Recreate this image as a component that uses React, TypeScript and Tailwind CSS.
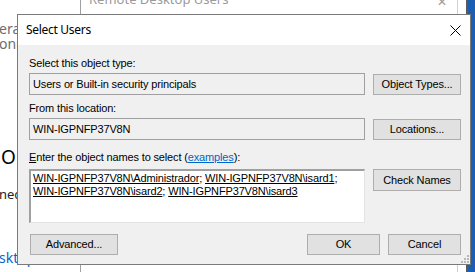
import React from "react";

const sans = { fontFamily: '"Liberation Sans", Arial, sans-serif' };
const ui = { fontFamily: '"Noto Sans", "Open Sans", sans-serif' };

function Btn({ children, className = "" }: { children: React.ReactNode; className?: string }) {
  return (
    <div
      className={
        "flex items-center justify-center bg-[#e1e1e1] border border-[#adadad] text-[11px] tracking-[-0.15px] text-black leading-none " +
        className
      }
    >
      {children}
    </div>
  );
}

function Name({ t }: { t: string }) {
  return <span className="underline underline-offset-[1px]">{t}</span>;
}

export default function App() {
  return (
    <div className="relative w-[475px] h-[272px] bg-white overflow-hidden" style={sans}>
      {/* background window */}
      <div className="absolute left-[80px] top-0 w-px h-[272px] bg-[#a0a0a0]" />
      <div className="absolute left-[457px] top-0 w-px h-[272px] bg-[#d0d0d0]" />
      <div className="absolute left-[466px] top-0 w-[2px] h-[272px] bg-[#5a5a5a]" />
      <div className="absolute left-[468px] top-0 w-[7px] h-[272px] bg-[#1a5fb4]" />
      <div
        className="absolute left-[89px] top-[-9px] text-[13px] leading-[16px] text-[#9a9a9a] whitespace-nowrap"
        style={ui}
      >
        Remote Desktop Users
      </div>
      <div className="absolute left-[437px] top-[-7px] text-[12px] text-[#9a9a9a]">✕</div>
      <div
        className="absolute left-[-1px] top-[21px] text-[14px] leading-[16px] text-[#6d6d6d] whitespace-nowrap"
        style={ui}
      >
        <div>eral</div>
        <div className="mt-[-1px]">onne</div>
      </div>
      <div
        className="absolute left-[1px] top-[143px] text-[19px] text-black whitespace-nowrap"
        style={ui}
      >
        O
      </div>
      <div
        className="absolute left-[-1px] top-[185px] text-[13px] text-[#222] whitespace-nowrap"
        style={ui}
      >
        nect
      </div>
      <div
        className="absolute left-[-1px] top-[247px] text-[14px] text-[#0066cc] whitespace-nowrap"
        style={ui}
      >
        sktop
      </div>

      {/* dialog */}
      <div className="absolute left-[17px] top-[14px] w-[454px] h-[251px] border border-[#7a7a7a] bg-[#f0f0f0] flex flex-col">
        <div className="h-[30px] bg-white flex items-center justify-between pl-[8px] pr-[7px] shrink-0">
          <span className="text-[12px] tracking-[-0.3px] text-black" style={ui}>
            Select Users
          </span>
          <svg width="11" height="11" viewBox="0 0 11 11" className="mr-[2px]">
            <path d="M0.5 0.5 L10.5 10.5 M10.5 0.5 L0.5 10.5" stroke="#000" strokeWidth="1" />
          </svg>
        </div>
        <div className="flex-1 flex flex-col pl-[11px] pt-[12px] text-[11px] tracking-[-0.15px] text-black">
          <div className="h-[13px] leading-[13px]">Select this object type:</div>
          <div className="mt-[3px] flex gap-[8px] items-start">
            <div className="w-[336px] h-[22px] border border-[#a0a0a0] bg-[#f0f0f0] flex items-center pl-[3px]">
              Users or Built-in security principals
            </div>
            <Btn className="w-[88px] h-[21px] mt-[1px]">Object Types...</Btn>
          </div>
          <div className="mt-[7px] h-[13px] leading-[13px]">From this location:</div>
          <div className="mt-[3px] flex gap-[8px] items-start">
            <div className="w-[336px] h-[22px] border border-[#a0a0a0] bg-[#f0f0f0] flex items-center pl-[3px]">
              WIN-IGPNFP37V8N
            </div>
            <Btn className="w-[88px] h-[21px] mt-[1px]">Locations...</Btn>
          </div>
          <div className="mt-[11px] h-[13px] leading-[13px]">
            <span className="underline">E</span>nter the object names to select (
            <span className="text-[#0066cc] underline">examples</span>):
          </div>
          <div className="mt-[5px] flex gap-[8px] items-start">
            <div className="w-[336px] h-[54px] border-t-2 border-l-2 border-r border-b border-t-[#a0a0a0] border-l-[#a0a0a0] border-r-[#e3e3e3] border-b-[#e3e3e3] bg-white pl-[2px] pt-[1px] leading-[13px]">
              <div className="whitespace-nowrap">
                <Name t="WIN-IGPNFP37V8N\Administrador" />; <Name t="WIN-IGPNFP37V8N\isard1" />;
              </div>
              <div className="whitespace-nowrap">
                <Name t="WIN-IGPNFP37V8N\isard2" />; <Name t="WIN-IGPNFP37V8N\isard3" />
              </div>
            </div>
            <Btn className="w-[88px] h-[22px]">Check Names</Btn>
          </div>
          <div className="mt-[11px] flex items-start">
            <Btn className="w-[88px] h-[21px] ml-[1px]">Advanced...</Btn>
            <div className="flex-1" />
            <div className="flex gap-[8px] pr-[9px]">
              <Btn className="w-[73px] h-[21px]">OK</Btn>
              <Btn className="w-[73px] h-[21px]">Cancel</Btn>
            </div>
          </div>
        </div>
        {/* size grip */}
        <svg width="8" height="8" viewBox="0 0 8 8" className="absolute right-[1px] bottom-[1px]">
          <rect x="6" y="0" width="2" height="2" fill="#b8b8b8" />
          <rect x="3" y="3" width="2" height="2" fill="#b8b8b8" />
          <rect x="6" y="3" width="2" height="2" fill="#b8b8b8" />
          <rect x="0" y="6" width="2" height="2" fill="#b8b8b8" />
          <rect x="3" y="6" width="2" height="2" fill="#b8b8b8" />
          <rect x="6" y="6" width="2" height="2" fill="#b8b8b8" />
        </svg>
      </div>
    </div>
  );
}
